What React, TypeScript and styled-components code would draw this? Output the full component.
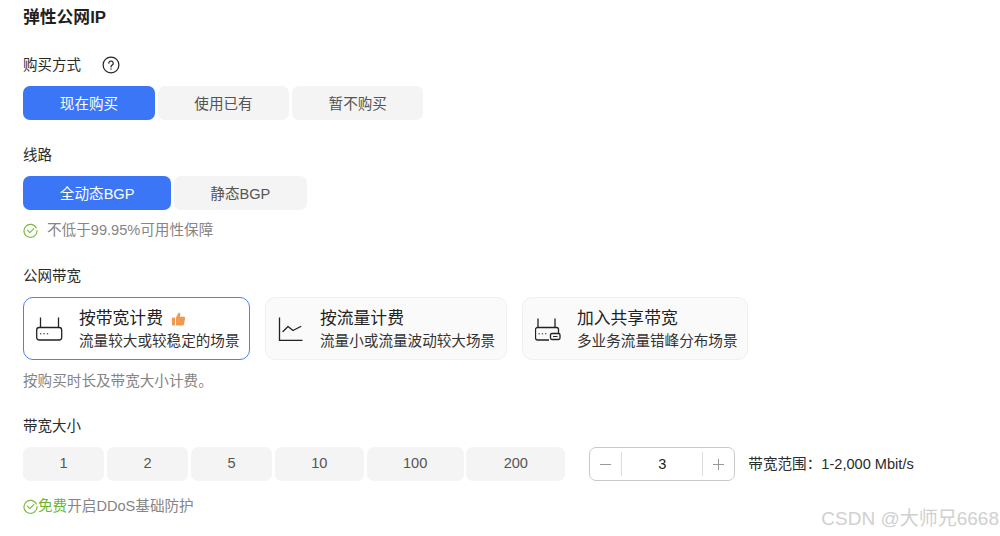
import React from "react";
import styled, { createGlobalStyle } from "styled-components";

const GlobalStyle = createGlobalStyle`
  html, body {
    margin: 0;
    padding: 0;
    background: #fff;
  }
  body {
    font-family: "Liberation Sans", "Noto Sans CJK SC", sans-serif;
    color: #222;
  }
`;

const Page = styled.div`
  position: relative;
  width: 1000px;
  height: 536px;
  overflow: hidden;
  padding: 8px 0 0 23px;
  box-sizing: border-box;
`;

const Title = styled.h2`
  margin: 0 0 27px;
  height: 20px;
  line-height: 20px;
  font-size: 16.8px;
  font-weight: 700;
  color: #1f1f1f;
`;

const Label = styled.div`
  display: flex;
  align-items: center;
  gap: 21px;
  height: 20px;
  font-size: 14.5px;
  line-height: 20px;
  color: #2b2b2b;
`;

const Section = styled.section<{ $gap: number }>`
  margin-bottom: ${(p) => p.$gap}px;
`;

const Options = styled.div`
  display: flex;
  gap: 2.7px;
  margin-top: 11px;
`;

const Option = styled.div<{ $w: number; $active?: boolean }>`
  width: ${(p) => p.$w}px;
  height: 34px;
  box-sizing: border-box;
  padding-bottom: 2px;
  display: flex;
  align-items: center;
  justify-content: center;
  border-radius: 7px;
  font-size: 14.6px;
  background: ${(p) => (p.$active ? "#3b76f6" : "#f4f4f4")};
  color: ${(p) => (p.$active ? "#fff" : "#555")};
`;

const Note = styled.div<{ $top: number }>`
  display: flex;
  align-items: center;
  margin-top: ${(p) => p.$top}px;
  height: 20px;
  font-size: 14.6px;
  line-height: 20px;
  color: #858585;
`;

const CheckWrap = styled.span<{ $mr: number }>`
  display: inline-flex;
  margin-right: ${(p) => p.$mr}px;
`;

const Green = styled.span`
  color: #6fb52c;
`;

const Cards = styled.div`
  display: flex;
  gap: 15px;
  margin-top: 11px;
`;

const Card = styled.div<{ $w: number; $active?: boolean }>`
  width: ${(p) => p.$w}px;
  height: 63px;
  box-sizing: border-box;
  display: flex;
  align-items: center;
  padding-left: 12px;
  gap: 15px;
  border-radius: 10px;
  background: ${(p) => (p.$active ? "#fff" : "#fafafa")};
  border: 1px solid ${(p) => (p.$active ? "#4c80f1" : "#f0f0f0")};
`;

const CardText = styled.div`
  display: flex;
  flex-direction: column;
  gap: 1px;
  padding-top: 2px;
`;

const CardTitle = styled.div`
  display: flex;
  align-items: center;
  gap: 8px;
  font-size: 16.8px;
  line-height: 22px;
  color: #222;
`;

const CardDesc = styled.div`
  font-size: 14.6px;
  line-height: 20px;
  color: #333;
  white-space: nowrap;
`;

const SizeRow = styled.div`
  display: flex;
  align-items: center;
  margin-top: 11px;
`;

const Sizes = styled.div`
  display: flex;
  gap: 2.7px;
  margin-right: 24px;
`;

const Stepper = styled.div`
  width: 146px;
  height: 34px;
  box-sizing: border-box;
  display: flex;
  align-items: center;
  border: 1px solid #c9c9c9;
  border-radius: 7px;
  margin-right: 13px;
`;

const StepButton = styled.div`
  width: 31px;
  height: 24px;
  display: flex;
  align-items: center;
  justify-content: center;
  color: #999;
`;

const StepValue = styled.div`
  flex: 1;
  height: 24px;
  line-height: 24px;
  text-align: center;
  font-size: 14.6px;
  color: #222;
  border-left: 1px solid #ddd;
  border-right: 1px solid #ddd;
`;

const Range = styled.div`
  font-size: 14.6px;
  color: #2b2b2b;
  white-space: nowrap;
  margin-bottom: 3px;
`;

const Watermark = styled.div`
  position: absolute;
  right: 1px;
  bottom: 6px;
  font-size: 19px;
  line-height: 22px;
  color: #d0d0d0;
  white-space: nowrap;
`;

const CheckIcon = () => (
  <svg width="15" height="15" viewBox="0 0 15 15" fill="none" stroke="#7dbb45" strokeWidth="1.2">
    <path d="M13.3 4.9A6.5 6.5 0 1 0 14 7.5" strokeLinecap="round" />
    <path d="M4.4 7.2l2.4 2.4 4-4" strokeLinecap="round" strokeLinejoin="round" />
  </svg>
);

const HelpIcon = () => (
  <svg width="18" height="18" viewBox="0 0 18 18" fill="none" stroke="#222" strokeWidth="1.2">
    <circle cx="9" cy="9" r="7.9" />
    <path d="M6.8 7.2a2.2 2.2 0 1 1 3.4 1.9c-.8.5-1.2.9-1.2 1.9" strokeLinecap="round" />
    <circle cx="9" cy="13" r=".7" fill="#222" stroke="none" />
  </svg>
);

const RouterIcon = () => (
  <svg width="28" height="24" viewBox="0 0 28 24" fill="none" stroke="#222" strokeWidth="1.3">
    <path d="M4.5 .5v10M22.5 .5v10" />
    <rect x="0.7" y="10.5" width="25" height="12.5" rx="2.5" />
    <path d="M4 16.8h1.4M7.4 16.8h1.4M10.8 16.8h1.4" strokeWidth="1" />
  </svg>
);

const SharedRouterIcon = () => (
  <svg width="27" height="24" viewBox="0 0 27 24" fill="none" stroke="#222" strokeWidth="1.3">
    <path d="M3 1.5v9M20 1.5v9" />
    <path d="M14 23H2.5a2 2 0 0 1-2-2v-8.5a2 2 0 0 1 2-2h19a2 2 0 0 1 2 2v3.5" />
    <rect x="15.5" y="16.5" width="9.5" height="6" rx="1.4" />
    <path d="M18 19.5h4.5" strokeWidth="1" />
    <path d="M3.5 16.8h1.3M6.8 16.8h1.3M10.1 16.8h1.3" strokeWidth="1" />
  </svg>
);

const ChartIcon = () => (
  <svg width="27" height="24" viewBox="0 0 27 24" fill="none" stroke="#222" strokeWidth="1.3">
    <path d="M1.5 .5v23h23" />
    <path d="M5 14.5l5-5 5 4 7.7-4" strokeLinejoin="round" strokeLinecap="round" />
  </svg>
);

const ThumbIcon = () => (
  <svg width="15" height="14" viewBox="0 0 14 14" fill="#ef9a50">
    <rect x="0.5" y="5.5" width="3" height="8" rx="0.6" />
    <path d="M4.5 5.5 7 .8c.9-.4 1.9.3 1.8 1.4L8.5 4.8h3.8c.9 0 1.5.8 1.3 1.7l-1.2 6c-.1.6-.7 1-1.3 1H4.5z" />
  </svg>
);

const sizes = [
  { v: "1", w: 81.3 },
  { v: "2", w: 81.3 },
  { v: "5", w: 81 },
  { v: "10", w: 89.3 },
  { v: "100", w: 97 },
  { v: "200", w: 99 },
];

export default function App() {
  return (
    <Page>
      <GlobalStyle />
      <Title>弹性公网IP</Title>

      <Section $gap={25}>
        <Label>
          购买方式
          <HelpIcon />
        </Label>
        <Options>
          <Option $w={132} $active>现在购买</Option>
          <Option $w={131.7}>使用已有</Option>
          <Option $w={131.4}>暂不购买</Option>
        </Options>
      </Section>

      <Section $gap={26}>
        <Label>线路</Label>
        <Options>
          <Option $w={148.3} $active>全动态BGP</Option>
          <Option $w={132.7}>静态BGP</Option>
        </Options>
        <Note $top={10}>
          <CheckWrap $mr={9}>
            <CheckIcon />
          </CheckWrap>
          不低于99.95%可用性保障
        </Note>
      </Section>

      <Section $gap={25}>
        <Label>公网带宽</Label>
        <Cards>
          <Card $w={227} $active>
            <RouterIcon />
            <CardText>
              <CardTitle>
                按带宽计费
                <ThumbIcon />
              </CardTitle>
              <CardDesc>流量较大或较稳定的场景</CardDesc>
            </CardText>
          </Card>
          <Card $w={242}>
            <ChartIcon />
            <CardText>
              <CardTitle>按流量计费</CardTitle>
              <CardDesc>流量小或流量波动较大场景</CardDesc>
            </CardText>
          </Card>
          <Card $w={226}>
            <SharedRouterIcon />
            <CardText>
              <CardTitle>加入共享带宽</CardTitle>
              <CardDesc>多业务流量错峰分布场景</CardDesc>
            </CardText>
          </Card>
        </Cards>
        <Note $top={11}>按购买时长及带宽大小计费。</Note>
      </Section>

      <Section $gap={0}>
        <Label>带宽大小</Label>
        <SizeRow>
          <Sizes>
            {sizes.map((s) => (
              <Option key={s.v} $w={s.w}>
                {s.v}
              </Option>
            ))}
          </Sizes>
          <Stepper>
            <StepButton>
              <svg width="11" height="11" viewBox="0 0 11 11" stroke="#999" strokeWidth="1">
                <path d="M0 5.5h11" />
              </svg>
            </StepButton>
            <StepValue>3</StepValue>
            <StepButton>
              <svg width="11" height="11" viewBox="0 0 11 11" stroke="#999" strokeWidth="1">
                <path d="M0 5.5h11M5.5 0v11" />
              </svg>
            </StepButton>
          </Stepper>
          <Range>带宽范围：1-2,000 Mbit/s</Range>
        </SizeRow>
        <Note $top={15}>
          <CheckWrap $mr={0}>
            <CheckIcon />
          </CheckWrap>
          <Green>免费</Green>
          开启DDoS基础防护
        </Note>
      </Section>

      <Watermark>CSDN @大师兄6668</Watermark>
    </Page>
  );
}
